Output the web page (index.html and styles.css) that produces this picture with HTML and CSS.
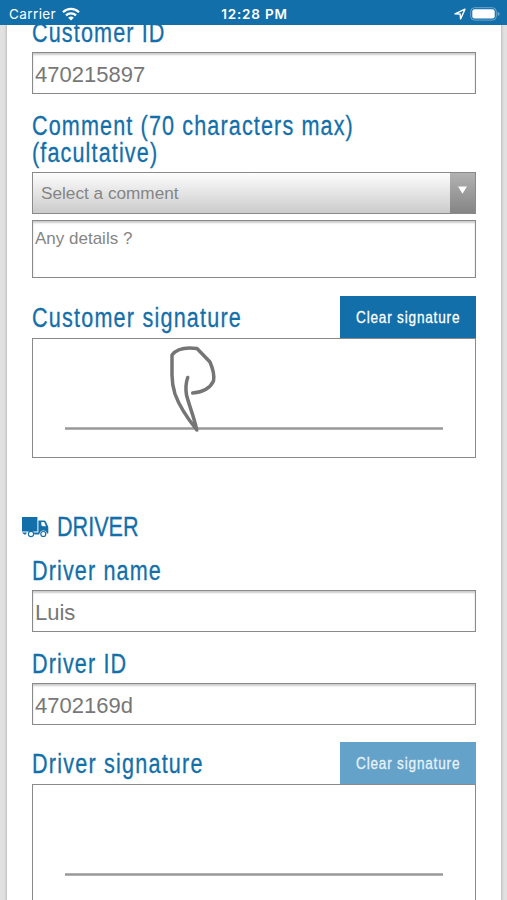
FILE: index.html
```html
<!DOCTYPE html>
<html lang="en">
<head>
  <meta charset="utf-8" />
  <meta name="viewport" content="width=device-width, initial-scale=1" />
  <title>Signatures</title>
  <link rel="stylesheet" href="styles.css">
</head>
<body>
  <header class="status-bar">
    <div class="status-left">
      <span class="carrier">Carrier</span>
      <svg class="wifi" width="18" height="14" viewBox="0 0 18 14" fill="none" stroke="#fff" stroke-width="2.3">
        <path d="M1 5.2a11.4 11.4 0 0 1 16 0" />
        <path d="M4 8.4a7.2 7.2 0 0 1 10 0" />
        <path d="M9 13.6L6.2 10.8a4 4 0 0 1 5.6 0z" fill="#fff" stroke="none" />
      </svg>
    </div>
    <span class="clock">12:28 PM</span>
    <div class="status-right">
      <svg width="12" height="12" viewBox="0 0 12 12" fill="none" stroke="#fff" stroke-width="1.4" stroke-linejoin="round">
        <path d="M1 5.9L11 1.2L6.6 10.9L6.1 6z" />
      </svg>
      <svg width="30" height="14" viewBox="0 0 30 14">
        <rect x="0.7" y="0.7" width="25.6" height="12.4" rx="3.8" fill="none" stroke="#6ea6cc" stroke-width="1" />
        <rect x="2.3" y="2.3" width="22.4" height="9.2" rx="2.2" fill="#fff" />
        <path d="M27.6 4.7q2 .6 2 2.2t-2 2.2z" fill="#6ea6cc" />
      </svg>
    </div>
  </header>

  <main class="page">
    <form class="sheet">
      <label class="label" for="customerId">Customer ID</label>
      <input class="field" type="text" id="customerId" value="470215897" />

      <label class="label" for="comment">Comment (70 characters max)<br>(facultative)</label>
      <div class="select" id="comment">
        <span class="select-text">Select a comment</span>
        <span class="select-arrow">
          <svg width="9" height="8" viewBox="0 0 9 8"><path d="M0 0.5h9L4.5 7.8z" fill="#fff" /></svg>
        </span>
      </div>
      <textarea class="details" placeholder="Any details ?"></textarea>

      <div class="sign-head">
        <span class="label">Customer signature</span>
        <button type="button" class="clear"><span>Clear signature</span></button>
      </div>
      <div class="pad">
        <svg width="443" height="118" viewBox="0 0 443 118" fill="none" stroke-linecap="round" stroke-linejoin="round">
          <path d="M32 89.5H410" stroke="#999" stroke-width="2.6" stroke-linecap="butt" />
          <path d="M154.7 38.5C152.8 44 152.5 50 153.5 56C156 66 161 78 163.8 91C155 80 147 69 142 55C139.5 47 139 40 139 36V16C143.500 10 153 8 164 9.500L177 23C180 30 181.500 37 180.500 42C177 49.500 171 53 159.700 54" stroke="#757575" stroke-width="3.5" />
        </svg>
      </div>

      <h2 class="section">
        <svg width="27" height="21" viewBox="0 0 27 21">
          <path d="M0 0h15.4v14.5H0z M16.4 3.4h5.6q1.2 0 1.9 1.3l2 4.2q.4.8.4 1.7v5.9h-9.9z M0 15.5h5q-1 1-1 2.1H2.2z M11.4 15.5h7q-1 .7-1.200 2.100h-4.800q0-1.200-1-2.100z" fill="#136fa9" />
          <path d="M19.3 5h2.2q.7 0 1 .7l1.5 3.5h-3.2l-1.5-1z" fill="#fff" />
          <circle cx="9" cy="17" r="2.6" fill="#fff" stroke="#136fa9" stroke-width="1.1" />
          <circle cx="21.3" cy="17" r="3.6" fill="#fff" />
          <circle cx="21.3" cy="17" r="2.5" fill="#fff" stroke="#136fa9" stroke-width="1.2" />
        </svg>
        <span class="section-title">DRIVER</span>
      </h2>

      <label class="label" for="driverName">Driver name</label>
      <input class="field" type="text" id="driverName" value="Luis" />

      <label class="label" for="driverId">Driver ID</label>
      <input class="field last" type="text" id="driverId" value="4702169d" />

      <div class="sign-head">
        <span class="label">Driver signature</span>
        <button type="button" class="clear disabled"><span>Clear signature</span></button>
      </div>
      <div class="pad">
        <svg width="443" height="118" viewBox="0 0 443 118">
          <path d="M32 89.5H410" stroke="#999" stroke-width="2.6" />
        </svg>
      </div>
    </form>
  </main>
</body>
</html>
```
FILE: styles.css
```css
* {
  box-sizing: border-box;
}
body {
  margin: 0;
  height: 900px;
  overflow: hidden;
  display: flex;
  flex-direction: column;
  background-color: #e1e1e1;
  font-family: "Liberation Sans", Arial, sans-serif;
}
.status-bar {
  flex: none;
  height: 25px;
  padding: 2px 7px 0 9px;
  display: grid;
  grid-template-columns: 1fr auto 1fr;
  align-items: center;
  background-color: #136fa9;
  color: #fff;
  font-family: Inter, sans-serif;
  font-size: 13px;
}
.status-left,
.status-right {
  display: flex;
  align-items: center;
}
.status-left {
  gap: 6px;
}
.status-right {
  justify-content: flex-end;
  gap: 4px;
}
.carrier {
  font-size: 13.5px;
  letter-spacing: 0.4px;
}
.clock {
  font-size: 13.5px;
  font-weight: 600;
  letter-spacing: 0.8px;
}
.page {
  flex: 1;
  min-height: 0;
  overflow: hidden;
  padding: 0 6px 0 7px;
}
.sheet {
  height: 900px;
  padding: 0 25px;
  background-color: #fff;
  box-shadow: 0 0 3px #999;
}
/* condensed lettering */
.label,
.section-title,
.clear span {
  display: block;
  white-space: nowrap;
  font-family: "Liberation Sans", Arial, sans-serif;
  -webkit-text-stroke: 0.3px currentColor;
  transform: scaleX(0.8);
}
.label {
  color: #136fa9;
  font-size: 27px;
  line-height: 27px;
  letter-spacing: 1.4px;
  margin-bottom: 5px;
  transform-origin: left;
}
.sheet > .label:first-child {
  margin-top: -5px;
}
.field,
.details {
  display: block;
  width: 100%;
  margin: 0 0 19px;
  border: 1px solid #8a8a8a;
  border-radius: 0;
  background-color: #fff;
  box-shadow: inset 0 2px 2px #ccc;
  color: #777;
  font-family: inherit;
}
.field {
  height: 42px;
  padding: 4px 2px 0;
  font-size: 22px;
}
.field.last {
  margin-bottom: 17px;
}
.select {
  display: flex;
  height: 42px;
  margin-bottom: 6px;
  border: 1px solid #8a8a8a;
  background: linear-gradient(#fdfdfd, #cbcbcb);
  color: #858585;
  font-size: 17.2px;
}
.select-text {
  flex: 1;
  padding-left: 8px;
  line-height: 40px;
}
.select-arrow {
  width: 25px;
  padding: 13px 0 0 8px;
  line-height: 0;
  background: linear-gradient(#b2b2b2, #858585);
}
.details {
  height: 58px;
  margin-bottom: 18px;
  padding: 8px 2px;
  font-size: 17px;
  resize: none;
}
.details::placeholder {
  color: #858585;
}
.sign-head {
  display: flex;
  justify-content: space-between;
  align-items: center;
  height: 42px;
}
.sign-head .label {
  width: 250px;
  margin: 2px 0 0;
  letter-spacing: 1.5px;
}
.clear {
  display: flex;
  justify-content: center;
  align-items: center;
  width: 136px;
  height: 42px;
  padding: 2px 0 0;
  border: none;
  background-color: #136fa9;
  color: #fff;
  font-size: 17px;
  letter-spacing: 1px;
  cursor: pointer;
}
.clear.disabled {
  background-color: #65a2ca;
  color: #e8f3fa;
}
.pad {
  height: 120px;
  border: 1px solid #8a8a8a;
  background-color: #fff;
}
.section {
  display: flex;
  align-items: center;
  gap: 8px;
  height: 27px;
  margin: 56px 0 17px -10px;
  color: #136fa9;
  font-size: 27px;
  font-weight: normal;
  line-height: 27px;
}
.section-title {
  transform-origin: left;
}
```
